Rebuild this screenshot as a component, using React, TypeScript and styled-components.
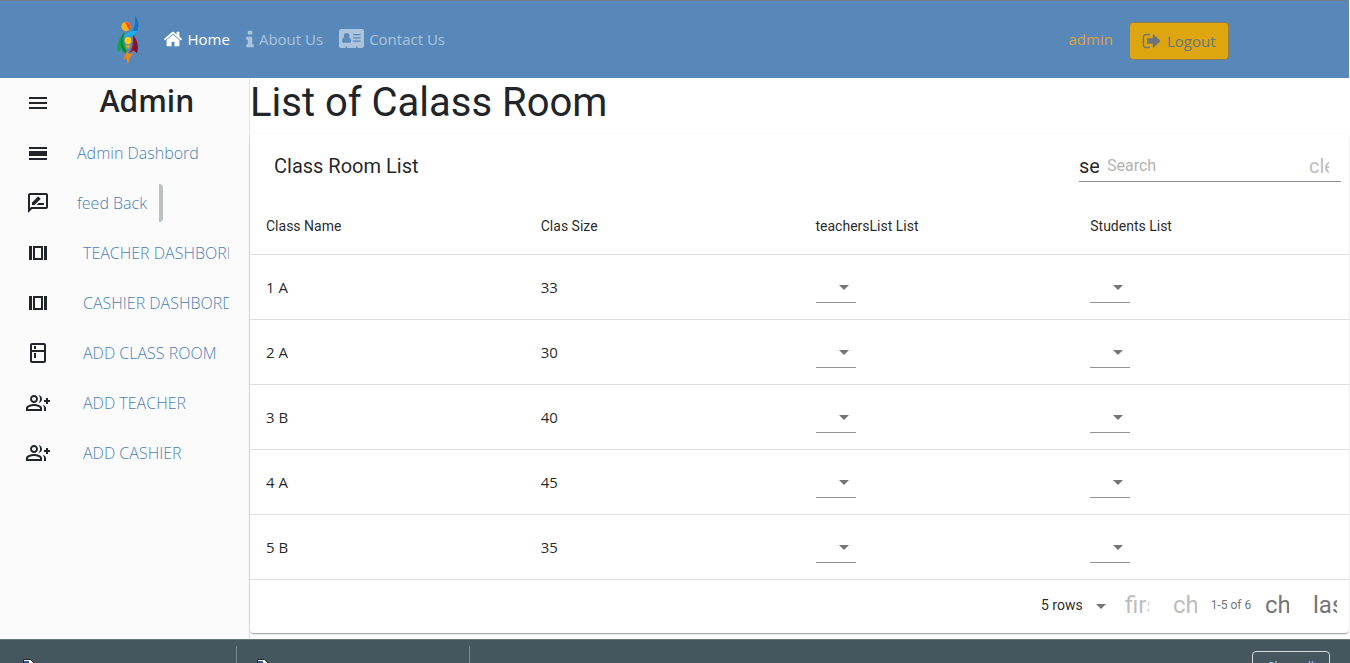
import React from "react";
import styled, { createGlobalStyle } from "styled-components";
import {
  MdMenu,
  MdOutlineRateReview,
  MdOutlineKitchen,
  MdOutlineGroupAdd,
  MdArrowDropDown,
} from "react-icons/md";

const ui = `"Open Sans", "Noto Sans", sans-serif`;
const roboto = `Roboto, "Liberation Sans", sans-serif`;

const GlobalStyle = createGlobalStyle`
  *, *::before, *::after { box-sizing: border-box; }
  body { margin: 0; background: #fff; color: #212529; font-family: ${roboto}; font-size: 16px; }
  h1, h2, h3 { margin: 0; padding: 0; }
  button, input, select { font: inherit; color: inherit; }
`;

const Shell = styled.div`
  display: flex;
  flex-direction: column;
  height: 100vh;
  overflow: hidden;
`;

const Header = styled.header`
  flex: none;
  height: 78px;
  margin-right: 1px;
  background: #5888b9;
  border-top: 1px solid #6d7f8c;
`;

const HeaderInner = styled.div`
  display: flex;
  align-items: center;
  max-width: 1140px;
  height: 100%;
  margin: 0 auto;
  padding: 0 16px 0 12px;
  font-family: ${ui};
  font-size: 15px;
`;

const Brand = styled.a`
  display: flex;
  margin-right: 20px;
`;

const Nav = styled.nav`
  display: flex;
  flex: 1;
  gap: 16px;
  padding-bottom: 2px;
`;

const NavLink = styled.a<{ $active?: boolean }>`
  display: flex;
  align-items: center;
  gap: 5px;
  color: ${(p) => (p.$active ? "#fff" : "#acc3dc")};
  text-decoration: none;
  white-space: nowrap;
`;

const UserLink = styled.a`
  padding-bottom: 2px;
  margin-right: 16px;
  color: #daa53f;
  text-decoration: none;
`;

const LogoutButton = styled.button`
  display: flex;
  align-items: center;
  gap: 5px;
  height: 38px;
  padding: 0 12px;
  margin-top: 2px;
  border: 1px solid #8a7d55;
  border-radius: 4px;
  background: #dda60f;
  color: #6c757d;
`;

const Body = styled.div`
  display: flex;
  flex: 1;
  min-height: 0;
`;

const Sidebar = styled.aside`
  flex: none;
  width: 250px;
  padding-right: 20px;
  background: #fbfbfb;
  border-right: 1px solid #e4e4e4;
  font-family: ${ui};
`;

const SideRow = styled.div`
  display: flex;
  align-items: center;
  height: 50px;
  overflow: hidden;
`;

const SideIcon = styled.span`
  display: flex;
  flex: none;
  justify-content: center;
  width: 65px;
  padding: 0 11px 0 22px;
`;

const MenuButton = styled.button`
  display: flex;
  flex: none;
  justify-content: center;
  width: 65px;
  padding: 0 11px 0 22px;
  border: 0;
  background: none;
`;

const SideTitle = styled.h2`
  flex: 1;
  padding-bottom: 4px;
  font-size: 30px;
  font-weight: 600;
  line-height: 40px;
  text-align: center;
`;

const SideLink = styled.a<{ $inset?: boolean; $focused?: boolean }>`
  height: 38px;
  padding: 0 12px 0 ${(p) => (p.$inset ? 18 : 12)}px;
  border-right: ${(p) => (p.$focused ? "4px solid #bcc0c4" : "0")};
  border-radius: 4px;
  color: #4a7fb8;
  font-size: 16px;
  font-weight: 300;
  line-height: 38px;
  text-decoration: none;
  white-space: nowrap;
`;

const Main = styled.main`
  flex: 1;
  min-width: 0;
`;

const PageTitle = styled.h1`
  height: 56px;
  font-size: 40px;
  font-weight: 400;
  line-height: 50px;
`;

const Card = styled.section`
  margin-right: 1px;
  border-radius: 4px;
  background: #fff;
  box-shadow: 0 2px 1px -1px rgba(0, 0, 0, 0.2), 0 1px 1px rgba(0, 0, 0, 0.14),
    0 1px 3px rgba(0, 0, 0, 0.12);
  color: rgba(0, 0, 0, 0.87);
`;

const Toolbar = styled.div`
  display: flex;
  align-items: center;
  justify-content: space-between;
  height: 64px;
  padding: 0 8px 0 24px;
`;

const CardTitle = styled.h3`
  font-size: 20px;
  font-weight: 400;
`;

const SearchField = styled.div`
  display: flex;
  align-items: center;
  width: 262px;
  height: 32px;
  padding-right: 12px;
  border-bottom: 1px solid #949494;
`;

const Ligature = styled.span<{ $size: number }>`
  display: block;
  flex: none;
  width: ${(p) => p.$size}px;
  overflow: hidden;
  font-size: ${(p) => p.$size}px;
  line-height: ${(p) => p.$size + 8}px;
  text-align: left;
`;

const SearchInput = styled.input`
  flex: 1;
  min-width: 0;
  padding: 0 8px;
  border: 0;
  outline: 0;
  background: none;
  &::placeholder { color: #b3b3b3; opacity: 1; }
`;

const ClearButton = styled.button`
  padding: 0;
  border: 0;
  background: none;
  color: #bdbdbd;
`;

const Table = styled.table`
  width: 100%;
  border-collapse: separate;
  border-spacing: 0;
  table-layout: fixed;
`;

const HeadCell = styled.th`
  height: 57px;
  padding: 0 16px;
  border-bottom: 1px solid #e0e0e0;
  font-size: 14px;
  font-weight: 400;
  text-align: left;
`;

const Cell = styled.td`
  height: 65px;
  padding: 0 16px;
  border-bottom: 1px solid #e0e0e0;
  font-family: ${ui};
  font-size: 15px;
`;

const Picker = styled.label`
  position: relative;
  display: block;
  width: 40px;
  height: 32px;
  border-bottom: 1px solid #949494;
  color: #757575;
  svg { position: absolute; top: 4px; right: 0; pointer-events: none; }
`;

const PickerSelect = styled.select`
  width: 100%;
  height: 100%;
  border: 0;
  outline: 0;
  background: none;
  appearance: none;
`;

const Pagination = styled.div`
  display: flex;
  align-items: center;
  justify-content: flex-end;
  height: 53px;
  padding-bottom: 4px;
`;

const RowsPicker = styled.label`
  position: relative;
  width: 72px;
  color: #757575;
  svg { position: absolute; top: 1px; right: 0; pointer-events: none; }
`;

const RowsSelect = styled.select`
  width: 100%;
  height: 24px;
  padding: 0;
  border: 0;
  outline: 0;
  background: none;
  color: rgba(0, 0, 0, 0.87);
  font-size: 14px;
  appearance: none;
`;

const PageButton = styled.button`
  padding: 0 12px;
  border: 0;
  background: none;
  color: #757575;
  &:disabled { color: #bdbdbd; }
`;

const RangeText = styled.span`
  width: 44px;
  color: #757575;
  font-size: 12px;
  text-align: center;
  white-space: nowrap;
`;

const Downloads = styled.footer`
  display: flex;
  flex: none;
  height: 24px;
  overflow: hidden;
  border-top: 1px solid #66757c;
  background: #45565f;
`;

const DownloadItem = styled.div`
  flex: none;
  width: 233px;
  height: 40px;
  margin-top: 6px;
  padding: 13px 0 0 20px;
  border-right: 1px solid #7c8990;
  &:first-child { width: 237px; padding-left: 23px; }
`;

const ShowAll = styled.button`
  width: 78px;
  height: 32px;
  margin: 11px 20px 0 auto;
  padding: 0;
  border: 1px solid #d5dade;
  border-radius: 4px;
  background: none;
  color: #a8c7fa;
  font-family: ${ui};
  font-size: 12px;
  line-height: 24px;
`;

type GlyphProps = { d: string; size?: number; box?: number };

const Glyph = ({ d, size = 20, box = 1792 }: GlyphProps) => (
  <svg width={size} height={size} viewBox={`0 0 ${box} ${box}`} fill="currentColor" fillRule="evenodd" aria-hidden="true">
    <path d={d} />
  </svg>
);

const homePath =
  "M1472 992v480q0 26-19 45t-45 19h-384v-384h-256v384h-384q-26 0-45-19t-19-45v-480q0-1 .5-3t.5-3l575-474 575 474q1 2 1 6zm223-69l-62 74q-8 9-21 11h-3q-13 0-21-7l-692-577-692 577q-12 8-24 7-13-2-21-11l-62-74q-8-10-7-23.5t11-21.5l719-599q32-26 76-26t76 26l244 204v-195q0-14 9-23t23-9h192q14 0 23 9t9 23v408l219 182q10 8 11 21.5t-7 23.5z";
const signOutPath =
  "M704 1440q0 4 1 20t.5 26.5-3 23.5-10 19.5-20.5 6.5h-320q-119 0-203.5-84.5t-84.5-203.5v-704q0-119 84.5-203.5t203.5-84.5h320q13 0 22.5 9.5t9.5 22.5q0 4 1 20t.5 26.5-3 23.5-10 19.5-20.5 6.5h-320q-66 0-113 47t-47 113v704q0 66 47 113t113 47h312l11.5 1 11.5 3 8 5.5 7 9 2 13.5zm928-544q0 26-19 45l-544 544q-19 19-45 19t-45-19-19-45v-288h-448q-26 0-45-19t-19-45v-384q0-26 19-45t45-19h448v-288q0-26 19-45t45-19 45 19l544 544q19 19 19 45z";
const dayPath = "M3 17h18v2H3zM3 10h18v5H3zM3 6h18v2H3z";
const storiesPath = "M3 5h3v14H3zM18 5h3v14h-3zM7 5h10v14H7zM9 7v10h6V7z";

const InfoGlyph = () => (
  <svg width="8" height="18" viewBox="576 64 640 1536" fill="currentColor" aria-hidden="true">
    <path d="M1216 1344v128q0 26-19 45t-45 19h-512q-26 0-45-19t-19-45v-128q0-26 19-45t45-19h64v-384h-64q-26 0-45-19t-19-45v-128q0-26 19-45t45-19h384q26 0 45 19t19 45v576h64q26 0 45 19t19 45zm-128-1152v192q0 26-19 45t-45 19h-256q-26 0-45-19t-19-45v-192q0-26 19-45t45-19h256q26 0 45 19t19 45z" />
  </svg>
);

const CardGlyph = () => (
  <svg width="25" height="19" viewBox="0 0 25 19" aria-hidden="true">
    <path
      fill="currentColor"
      d="M2 0h21a2 2 0 0 1 2 2v15a2 2 0 0 1-2 2h-4.500v-1.500h-1.500V19h-9v-1.500H6.500V19H2a2 2 0 0 1-2-2V2a2 2 0 0 1 2-2z"
    />
    <g fill="#5888b9">
      <circle cx="7.600" cy="6.700" r="2.700" />
      <path d="M3.200 12.200c0-2.200.7-3.800 2-4 .7.800 1.500 1.200 2.400 1.200s1.700-.4 2.400-1.200c1.300.2 2 1.800 2 4 0 1-.6 1.600-1.400 1.600h-6c-.8 0-1.400-.6-1.400-1.600z" />
      <path d="M14 5h7.500v1.200H14zM14 8.300h7.500v1.200H14zM14 11.600h7.500v1.200H14z" />
    </g>
  </svg>
);

const Logo = () => (
  <svg width="26" height="50" viewBox="0 0 26 50" aria-hidden="true">
    <path fill="#1178c8" d="M18 0c4 6 5 14 0 19l-7 3c5-5 8-11 7-22z" />
    <path fill="#19b2ee" d="M7 22c3-5 7-6 13-6-2 4-6 6-13 6z" />
    <circle cx="9" cy="11.500" r="4.700" fill="#f9b115" />
    <path fill="#f05023" d="M8 7a4.700 4.700 0 0 1 4 8z" />
    <path fill="#13a34b" d="M8 17C3 21-1 29 1 37c2 1 2-3 3-4 2 5 5 7 9 7-5-6-8-14-5-23z" />
    <path fill="#0b7a3d" d="M8 17c-5 7-3 17 5 23-5-1-9-6-9-13 0-4 1-8 4-10z" />
    <path fill="#b3122d" d="M16 20c4 4 6 10 4 18-2-1-3-3-4-2l-4 2c4-5 4-11 4-18z" />
    <path fill="#7b1230" d="M17 22c4 5 4 11 3 16l-4-4c1-4 2-7 1-12z" />
    <circle cx="11" cy="25.500" r="3.400" fill="#ffcd10" />
    <path fill="#c8a02b" d="M8.500 29.500h5l-1 4h-3z" />
    <path fill="#e9861d" d="M10 36l2 3 4-1-3 5-2 6-2-6-3 2 2-5z" />
  </svg>
);

const sideLinks = [
  { label: "Admin Dashbord", icon: <Glyph d={dayPath} size={24} box={24} /> },
  { label: "feed Back", icon: <MdOutlineRateReview size={24} />, focused: true },
  { label: "TEACHER DASHBORD", icon: <Glyph d={storiesPath} size={24} box={24} />, inset: true },
  { label: "CASHIER DASHBORD", icon: <Glyph d={storiesPath} size={24} box={24} />, inset: true },
  { label: "ADD CLASS ROOM", icon: <MdOutlineKitchen size={24} />, inset: true },
  { label: "ADD TEACHER", icon: <MdOutlineGroupAdd size={24} />, inset: true },
  { label: "ADD CASHIER", icon: <MdOutlineGroupAdd size={24} />, inset: true },
];

const rooms = [
  ["1 A", 33],
  ["2 A", 30],
  ["3 B", 40],
  ["4 A", 45],
  ["5 B", 35],
];

const ListPicker = ({ label }: { label: string }) => (
  <Picker>
    <PickerSelect aria-label={label} defaultValue="">
      <option value="" />
    </PickerSelect>
    <MdArrowDropDown size={24} />
  </Picker>
);

const FileGlyph = () => (
  <svg width="12" height="16" viewBox="0 0 12 16" aria-hidden="true">
    <path fill="#fff" stroke="#222" d="M.5.500h7l4 4v11H.500z" />
    <path fill="#2b579a" d="M1 2h5v8H1z" />
  </svg>
);

export default function App() {
  return (
    <Shell>
      <GlobalStyle />
      <Header>
        <HeaderInner>
          <Brand href="#" aria-label="Start page">
            <Logo />
          </Brand>
          <Nav>
            <NavLink href="#" $active>
              <Glyph d={homePath} />
              Home
            </NavLink>
            <NavLink href="#">
              <InfoGlyph />
              About Us
            </NavLink>
            <NavLink href="#">
              <CardGlyph />
              Contact Us
            </NavLink>
          </Nav>
          <UserLink href="#">admin</UserLink>
          <LogoutButton type="button">
            <Glyph d={signOutPath} />
            Logout
          </LogoutButton>
        </HeaderInner>
      </Header>
      <Body>
        <Sidebar>
          <SideRow>
            <MenuButton type="button" aria-label="Toggle menu">
              <MdMenu size={24} />
            </MenuButton>
            <SideTitle>Admin</SideTitle>
          </SideRow>
          {sideLinks.map((l) => (
            <SideRow key={l.label}>
              <SideIcon>{l.icon}</SideIcon>
              <SideLink href="#" $inset={l.inset} $focused={l.focused}>
                {l.label}
              </SideLink>
            </SideRow>
          ))}
        </Sidebar>
        <Main>
          <PageTitle>List of Calass Room</PageTitle>
          <Card>
            <Toolbar>
              <CardTitle>Class Room List</CardTitle>
              <SearchField>
                <Ligature $size={20}>search</Ligature>
                <SearchInput type="text" placeholder="Search" aria-label="Search" />
                <ClearButton type="button" aria-label="Clear search" disabled>
                  <Ligature $size={20}>clear</Ligature>
                </ClearButton>
              </SearchField>
            </Toolbar>
            <Table>
              <thead>
                <tr>
                  <HeadCell>Class Name</HeadCell>
                  <HeadCell>Clas Size</HeadCell>
                  <HeadCell>teachersList List</HeadCell>
                  <HeadCell>Students List</HeadCell>
                </tr>
              </thead>
              <tbody>
                {rooms.map(([name, size]) => (
                  <tr key={name}>
                    <Cell>{name}</Cell>
                    <Cell>{size}</Cell>
                    <Cell>
                      <ListPicker label={`Teachers of ${name}`} />
                    </Cell>
                    <Cell>
                      <ListPicker label={`Students of ${name}`} />
                    </Cell>
                  </tr>
                ))}
              </tbody>
            </Table>
            <Pagination>
              <RowsPicker>
                <RowsSelect aria-label="Rows per page" defaultValue="5">
                  <option value="5">5 rows</option>
                </RowsSelect>
                <MdArrowDropDown size={24} />
              </RowsPicker>
              <PageButton type="button" aria-label="First page" disabled>
                <Ligature $size={24}>first_page</Ligature>
              </PageButton>
              <PageButton type="button" aria-label="Previous page" disabled>
                <Ligature $size={24}>chevron_left</Ligature>
              </PageButton>
              <RangeText>1-5 of 6</RangeText>
              <PageButton type="button" aria-label="Next page">
                <Ligature $size={24}>chevron_right</Ligature>
              </PageButton>
              <PageButton type="button" aria-label="Last page">
                <Ligature $size={24}>last_page</Ligature>
              </PageButton>
            </Pagination>
          </Card>
        </Main>
      </Body>
      <Downloads>
        <DownloadItem>
          <FileGlyph />
        </DownloadItem>
        <DownloadItem>
          <FileGlyph />
        </DownloadItem>
        <ShowAll type="button">Show all</ShowAll>
      </Downloads>
    </Shell>
  );
}
